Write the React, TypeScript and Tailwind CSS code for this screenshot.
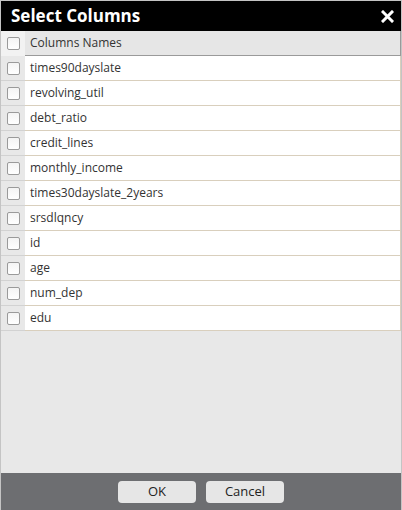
import React from 'react';

const columns = [
  'times90dayslate',
  'revolving_util',
  'debt_ratio',
  'credit_lines',
  'monthly_income',
  'times30dayslate_2years',
  'srsdlqncy',
  'id',
  'age',
  'num_dep',
  'edu',
];

function Box() {
  return (
    <span className="block w-[13px] h-[13px] rounded-[2px] border border-[#9a9a9a] bg-gradient-to-b from-[#f4f4f4] to-white" />
  );
}

export default function App() {
  return (
    <div
      className="w-[402px] h-[510px] flex flex-col border-x border-t border-[#c4c4c4] bg-[#e8e8e8] text-[#333] overflow-hidden"
      style={{ fontFamily: '"Open Sans", "Noto Sans", sans-serif' }}
    >
      {/* Title bar */}
      <div className="h-[30px] shrink-0 bg-black flex items-center justify-between pl-[10px] pr-[6px]">
        <span className="text-white text-[17px] font-bold">Select Columns</span>
        <svg width="13" height="13" viewBox="0 0 13 13" className="mr-[1px]">
          <path d="M2 2 L11 11 M11 2 L2 11" stroke="white" strokeWidth="3" strokeLinecap="square" />
        </svg>
      </div>

      {/* Table */}
      <div className="flex flex-col">
        <div className="flex h-[25px]">
          <div className="w-[24px] shrink-0 bg-[#f2f2f2] flex items-center justify-center pl-[1px]">
            <Box />
          </div>
          <div className="flex-1 bg-[#e6e6e6] border-b border-r border-[#9a9a9a] flex items-center pl-[5px] text-[12px]">
            Columns Names
          </div>
        </div>
        {columns.map((c) => (
          <div key={c} className="flex h-[25px]">
            <div className="w-[24px] shrink-0 border-b border-[#d2d2d2] flex items-center justify-center pl-[1px]">
              <Box />
            </div>
            <div className="flex-1 bg-white border-b border-r border-[#d9cfbd] flex items-center pl-[5px] text-[12px]">
              {c}
            </div>
          </div>
        ))}
      </div>

      <div className="flex-1" />

      {/* Footer */}
      <div className="h-[37px] shrink-0 bg-[#6d6e71] flex items-start justify-center gap-[10px] pt-[8px]">
        <button className="w-[78px] h-[22px] rounded-[4px] bg-[#e6e6e6] text-[13px] text-[#222]">OK</button>
        <button className="w-[78px] h-[22px] rounded-[4px] bg-[#e6e6e6] text-[13px] text-[#222]">Cancel</button>
      </div>
    </div>
  );
}
